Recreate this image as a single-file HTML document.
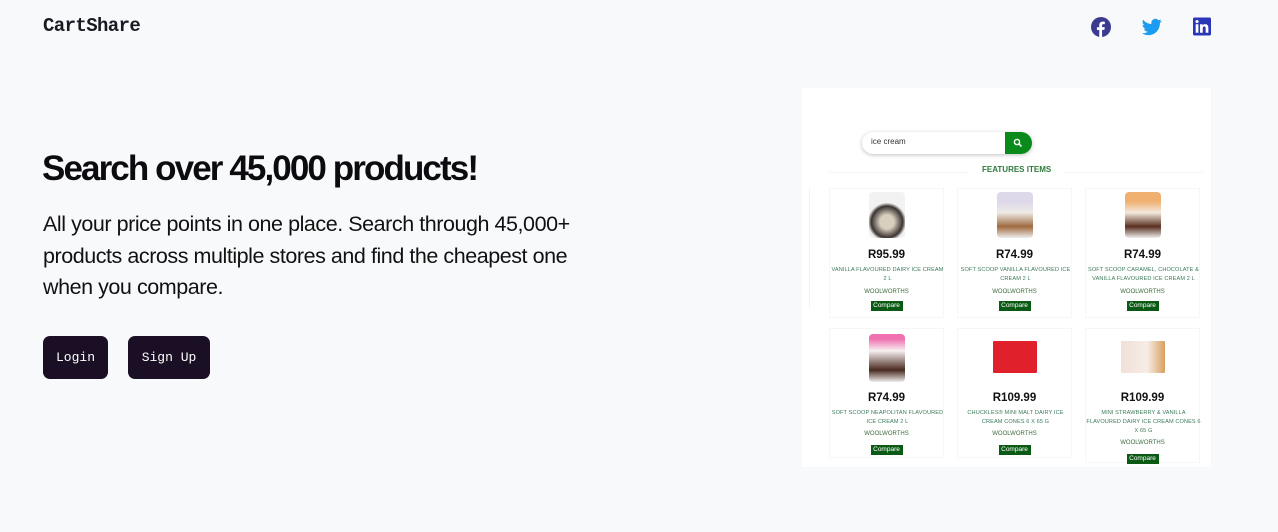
<!DOCTYPE html>
<html><head><style>
*{margin:0;padding:0;box-sizing:border-box}
body{width:1278px;height:532px;background:#f8f9fb;font-family:"Liberation Sans",sans-serif;position:relative;overflow:hidden}
.logo{position:absolute;left:43px;top:15px;font:bold 19px "Liberation Mono",monospace;color:#1a1a22;letter-spacing:-0.6px}
h1{position:absolute;left:42px;top:149px;font-size:35px;font-weight:bold;letter-spacing:-1.9px;color:#0b0b10;white-space:nowrap}
p.lead{position:absolute;left:43px;top:209px;width:560px;font-size:21.5px;line-height:31.5px;color:#111;letter-spacing:-0.45px}
.btn{position:absolute;top:336px;height:43px;background:#1a0f24;color:#fff;border-radius:7px;font:13px "Liberation Mono",monospace;display:flex;align-items:center;justify-content:center}
.shot{position:absolute;left:802px;top:88px;width:409px;height:379px;background:#fff;overflow:hidden}
.a{position:absolute}
.card{position:absolute;width:115px;border:1px solid #f6f6f6;text-align:center}
.price{position:absolute;width:100%;text-align:center;font-weight:bold;font-size:11.5px;color:#111}
.nm{position:absolute;left:-4px;width:123px;text-align:center;font-size:5.6px;line-height:9px;color:#3d7a5a;letter-spacing:0.1px}
.wl{position:absolute;width:100%;text-align:center;font-size:6px;color:#3d6b3d}
.cmp{position:absolute;left:50%;transform:translateX(-50%);width:32px;height:10px;background:#0b5a14;color:#fff;font-size:6.5px;line-height:10px;text-align:center}
.img{position:absolute;border-radius:4px}
</style></head><body>
<div class="logo">CartShare</div>
<svg class="a" style="left:1091px;top:17px" width="20" height="20" viewBox="0 0 24 24"><circle cx="12" cy="12" r="12" fill="#3b3c8f"/><path d="M13.3 24v-8.5h2.8l.4-3.3h-3.2v-2c0-.9.3-1.6 1.6-1.6h1.7V5.7c-.3 0-1.3-.1-2.5-.1-2.5 0-4.2 1.5-4.2 4.3v2.4H7.1v3.3h2.8V24z" fill="#fff"/></svg>
<svg class="a" style="left:1142px;top:17px" width="20" height="20" viewBox="0 0 24 24"><path fill="#1d9bf0" d="M23.6 4.6c-.9.4-1.8.6-2.8.8 1-.6 1.8-1.6 2.1-2.7-.9.6-2 1-3.1 1.2a4.9 4.9 0 0 0-8.4 4.5C7.4 8.2 3.8 6.3 1.4 3.3a4.9 4.9 0 0 0 1.5 6.6c-.8 0-1.600-.3-2.2-.6 0 2.4 1.7 4.4 3.900 4.8-.7.2-1.5.2-2.2.1.6 2 2.4 3.4 4.6 3.4A9.9 9.9 0 0 1 0 19.6 14 14 0 0 0 7.5 21.8c9.1 0 14-7.5 14-14v-.6c1-.7 1.8-1.6 2.1-2.6z"/></svg>
<svg class="a" style="left:1193px;top:17px" width="18" height="19" viewBox="0 0 24 24"><rect width="24" height="24" rx="2" fill="#2b37b8"/><path fill="#fff" d="M3.6 9h3.6v11.4H3.6zM5.4 3.3a2.1 2.1 0 1 1 0 4.2 2.1 2.1 0 0 1 0-4.2zM9.4 9h3.4v1.6c.5-.9 1.7-1.8 3.4-1.8 3.6 0 4.3 2.4 4.3 5.5v6.1h-3.6v-5.4c0-1.300 0-3-1.8-3s-2.1 1.4-2.1 2.9v5.5H9.4z"/></svg>

<h1>Search over 45,000 products!</h1>
<p class="lead">All your price points in one place. Search through 45,000+ products across multiple stores and find the cheapest one when you compare.</p>
<div class="btn" style="left:43px;width:65px">Login</div>
<div class="btn" style="left:128px;width:82px">Sign Up</div>

<div class="shot">
  <div class="a" style="left:60px;top:44px;width:170px;height:22px;border-radius:11px;background:#fff;box-shadow:0 1px 4px rgba(0,0,0,.25)"></div>
  <div class="a" style="left:69px;top:49px;font-size:8px;color:#333">ice cream</div>
  <div class="a" style="left:203px;top:44px;width:27px;height:22px;background:#0a8a1a;border-radius:0 11px 11px 0"></div>
  <svg class="a" style="left:211px;top:50px" width="10" height="10" viewBox="0 0 10 10"><circle cx="4" cy="4" r="2.6" stroke="#fff" stroke-width="1.4" fill="none"/><path d="M6 6l2.5 2.5" stroke="#fff" stroke-width="1.5"/></svg>
  <div class="a" style="left:28px;top:84px;width:137px;height:1px;background:#f3f3f3"></div>
  <div class="a" style="left:262px;top:84px;width:138px;height:1px;background:#f3f3f3"></div>
  <div class="a" style="left:180px;top:77px;font-size:8px;font-weight:bold;color:#2d7a3a">FEATURES ITEMS</div>
  <div class="a" style="left:0;top:100px;width:8px;height:120px;border-right:1px solid #f2f2f2"></div>

  <!-- row 1 -->
  <div class="card" style="left:27px;top:100px;height:130px">
    <div class="img" style="left:39px;top:3px;width:36px;height:46px;background:radial-gradient(circle at 50% 65%,#d8cfbf 20%,#3a3330 45%,transparent 55%),#f2f2f2"></div>
    <div class="price" style="top:60px">R95.99</div>
    <div class="nm" style="top:77px">VANILLA FLAVOURED DAIRY ICE CREAM<br>2 L</div>
    <div class="wl" style="top:100px">WOOLWORTHS</div>
    <div class="cmp" style="top:112px">Compare</div>
  </div>
  <div class="card" style="left:155px;top:100px;height:130px">
    <div class="img" style="left:39px;top:3px;width:36px;height:46px;background:linear-gradient(#ddd8ea 20%,#eeeae5 45%,#a06a40 75%,#eee)"></div>
    <div class="price" style="top:60px">R74.99</div>
    <div class="nm" style="top:77px">SOFT SCOOP VANILLA FLAVOURED ICE<br>CREAM 2 L</div>
    <div class="wl" style="top:100px">WOOLWORTHS</div>
    <div class="cmp" style="top:112px">Compare</div>
  </div>
  <div class="card" style="left:283px;top:100px;height:130px">
    <div class="img" style="left:39px;top:3px;width:36px;height:46px;background:linear-gradient(#f0b070 20%,#f2e8dc 45%,#5a3020 75%,#eee)"></div>
    <div class="price" style="top:60px">R74.99</div>
    <div class="nm" style="top:77px">SOFT SCOOP CARAMEL, CHOCOLATE &amp;<br>VANILLA FLAVOURED ICE CREAM 2 L</div>
    <div class="wl" style="top:100px">WOOLWORTHS</div>
    <div class="cmp" style="top:112px">Compare</div>
  </div>

  <!-- row 2 -->
  <div class="card" style="left:27px;top:240px;height:130px">
    <div class="img" style="left:39px;top:5px;width:36px;height:48px;background:linear-gradient(#f070b0 10%,#f6f0f0 35%,#4a2a20 75%,#eee)"></div>
    <div class="price" style="top:63px">R74.99</div>
    <div class="nm" style="top:80px">SOFT SCOOP NEAPOLITAN FLAVOURED<br>ICE CREAM 2 L</div>
    <div class="wl" style="top:102px">WOOLWORTHS</div>
    <div class="cmp" style="top:116px">Compare</div>
  </div>
  <div class="card" style="left:155px;top:240px;height:130px">
    <div class="img" style="left:35px;top:12px;width:44px;height:32px;border-radius:1px;background:#e0202a"></div>
    <div class="price" style="top:63px">R109.99</div>
    <div class="nm" style="top:80px">CHUCKLES® MINI MALT DAIRY ICE<br>CREAM CONES 6 X 65 G</div>
    <div class="wl" style="top:102px">WOOLWORTHS</div>
    <div class="cmp" style="top:116px">Compare</div>
  </div>
  <div class="card" style="left:283px;top:240px;height:135px">
    <div class="img" style="left:35px;top:12px;width:44px;height:32px;border-radius:1px;background:linear-gradient(90deg,#f0e0d8,#f6ece6 60%,#d8a060)"></div>
    <div class="price" style="top:63px">R109.99</div>
    <div class="nm" style="top:80px">MINI STRAWBERRY &amp; VANILLA<br>FLAVOURED DAIRY ICE CREAM CONES 6<br>X 65 G</div>
    <div class="wl" style="top:111px">WOOLWORTHS</div>
    <div class="cmp" style="top:125px">Compare</div>
  </div>
</div>
</body></html>
